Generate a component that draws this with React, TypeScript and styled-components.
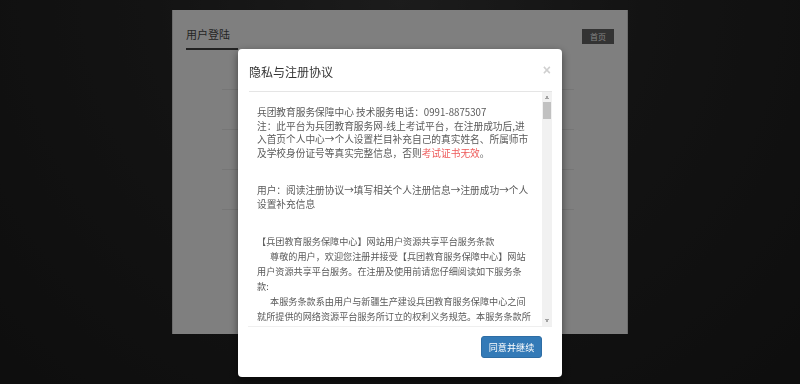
import styled, { createGlobalStyle } from 'styled-components';

const GlobalStyle = createGlobalStyle`
  html, body {
    margin: 0;
    padding: 0;
  }
  body {
    background: #242424;
    font-family: "Noto Sans CJK SC", "Noto Sans", sans-serif;
  }
`;

const formRows = ['用户名', '密码', '验证码', '身份证号'];

const clauses = [
  '一、服务条款的确认和接纳',
  '本网站各项服务的所有权和运作权归兵团教育服务保障中心所有。用户在注册时点击“同意并继续”按钮，即表示用户与本中心达成协议，完全接受本服务条款项下的全部条款。',
  '二、用户注册信息',
  '用户应当提供本人真实、准确、完整的个人资料，并在资料发生变化时及时更新。',
];

export default function App() {
  return (
    <>
      <GlobalStyle />
      <Page>
        <Panel>
          <PanelHeader>
            <TabTitle>用户登陆</TabTitle>
            <HomeButton>首页</HomeButton>
          </PanelHeader>
          {formRows.map((label) => (
            <FormRow key={label} />
          ))}
        </Panel>
      </Page>

      <Backdrop>
        <Modal>
          <ModalHeader>
            <ModalTitle>隐私与注册协议</ModalTitle>
            <CloseButton aria-label="close">×</CloseButton>
          </ModalHeader>

          <ModalBody>
            <Content>
              <Intro>
                兵团教育服务保障中心 技术服务电话：0991-8875307
                <br />
                注：此平台为兵团教育服务网-线上考试平台，在注册成功后,进入首页个人中心→个人设置栏目补充自己的真实姓名、所属师市及学校身份证号等真实完整信息，否则
                <Warn>考试证书无效</Warn>。
              </Intro>
              <Intro $gap>
                用户：阅读注册协议→填写相关个人注册信息→注册成功→个人设置补充信息
              </Intro>
              <Terms>
                <TermsPara>【兵团教育服务保障中心】网站用户资源共享平台服务条款</TermsPara>
                <TermsPara $indent>
                  尊敬的用户，欢迎您注册并接受【兵团教育服务保障中心】网站用户资源共享平台服务。在注册及使用前请您仔细阅读如下服务条款:
                </TermsPara>
                <TermsPara $indent>
                  本服务条款系由用户与新疆生产建设兵团教育服务保障中心之间就所提供的网络资源平台服务所订立的权利义务规范。本服务条款所称的网络资源平台服务是指兵团教育服务保障中心通过网站为用户提供的学习资源共享、在线考试及相关服务。
                </TermsPara>
                {clauses.map((text) => (
                  <TermsPara key={text} $indent>
                    {text}
                  </TermsPara>
                ))}
              </Terms>
            </Content>
            <ScrollBar>
              <ScrollArrow $dir="up" />
              <ScrollTrack>
                <ScrollThumb />
              </ScrollTrack>
              <ScrollArrow $dir="down" />
            </ScrollBar>
          </ModalBody>

          <ModalFooter>
            <PrimaryButton>同意并继续</PrimaryButton>
          </ModalFooter>
        </Modal>
      </Backdrop>
    </>
  );
}

const Page = styled.div`
  height: 384px;
  box-sizing: border-box;
  padding-top: 10px;
  display: flex;
  justify-content: center;
  background: radial-gradient(ellipse at 50% 0%, #383838 0%, #262626 45%, #1c1c1c 100%);
  overflow: hidden;
`;

const Panel = styled.div`
  width: 456px;
  height: 324px;
  box-sizing: border-box;
  padding: 0 13px;
  background: #ffffff;
  border-left: 1px solid #d8d8d8;
  border-right: 1px solid #d8d8d8;
`;

const PanelHeader = styled.div`
  height: 40px;
  display: flex;
  align-items: flex-end;
  justify-content: space-between;
`;

const TabTitle = styled.div`
  font-size: 11px;
  line-height: 14px;
  color: #4a4a4a;
  padding: 0 8px 7px 0;
  border-bottom: 2px solid #444;
`;

const HomeButton = styled.div`
  align-self: flex-start;
  margin-top: 19px;
  width: 32px;
  height: 15px;
  line-height: 15px;
  text-align: center;
  font-size: 8px;
  color: #fff;
  background: #666;
`;

const FormRow = styled.div`
  height: 40px;
  box-sizing: border-box;
  margin: 0 40px 0 36px;
  border-bottom: 1px solid #ececec;
  &:first-of-type {
    height: 57px;
  }
`;

const Backdrop = styled.div`
  position: fixed;
  inset: 0;
  background: rgba(0, 0, 0, 0.5);
`;

const Modal = styled.div`
  width: 324px;
  margin: 49px auto 0;
  background: #fff;
  border-radius: 4px;
  box-shadow: 0 3px 9px rgba(0, 0, 0, 0.5);
`;

const ModalHeader = styled.div`
  height: 42px;
  margin: 0 10px 0 11px;
  display: flex;
  align-items: center;
  justify-content: space-between;
  border-bottom: 1px solid #e5e5e5;
`;

const ModalTitle = styled.div`
  font-size: 12px;
  color: #333;
  padding-top: 3px;
`;

const CloseButton = styled.span`
  font-family: "Liberation Sans", Arial, sans-serif;
  font-size: 14px;
  font-weight: bold;
  color: #d0d0d0;
  margin-right: 1px;
  cursor: pointer;
`;

const ModalBody = styled.div`
  margin: 0 10px;
  height: 235px;
  box-sizing: border-box;
  display: flex;
  border-bottom: 1px solid #efefef;
`;

const Content = styled.div`
  flex: 1;
  min-width: 0;
  overflow: hidden;
  padding: 14px 8px 0 9px;
  color: #5a5a5a;
`;

const ScrollBar = styled.div`
  width: 10px;
  display: flex;
  flex-direction: column;
  background: #f1f1f1;
`;

const ScrollArrow = styled.div<{ $dir: 'up' | 'down' }>`
  height: 10px;
  background-repeat: no-repeat;
  background-position: center;
  background-size: 6px 4px;
  background-image: ${(p) =>
    p.$dir === 'up'
      ? 'conic-gradient(from 150deg at 50% 0%, #a3a3a3 0deg 60deg, transparent 60deg)'
      : 'conic-gradient(from 330deg at 50% 100%, #a3a3a3 0deg 60deg, transparent 60deg)'};
`;

const ScrollTrack = styled.div`
  flex: 1;
  padding: 0 1px;
`;

const ScrollThumb = styled.div`
  height: 17px;
  background: #c1c1c1;
`;

const Intro = styled.p<{ $gap?: boolean }>`
  margin: ${(p) => (p.$gap ? '24px' : '0')} 0 0;
  font-size: 9.7px;
  line-height: 13.6px;
`;

const Warn = styled.span`
  color: #ee5a5a;
`;

const Terms = styled.div`
  margin-top: 22px;
  padding-right: 3px;
  font-size: 9.15px;
  line-height: 15px;
`;

const TermsPara = styled.p<{ $indent?: boolean }>`
  margin: 0;
  text-indent: ${(p) => (p.$indent ? '13px' : '0')};
`;

const ModalFooter = styled.div`
  display: flex;
  justify-content: flex-end;
  padding: 9px 20px 19px;
`;

const PrimaryButton = styled.button`
  width: 61px;
  height: 22px;
  padding: 0;
  border: 1px solid #2e6da4;
  border-radius: 3px;
  background: #337ab7;
  color: #fff;
  font-family: "Noto Sans CJK SC", "Noto Sans", sans-serif;
  font-size: 9.1px;
  cursor: pointer;
`;
